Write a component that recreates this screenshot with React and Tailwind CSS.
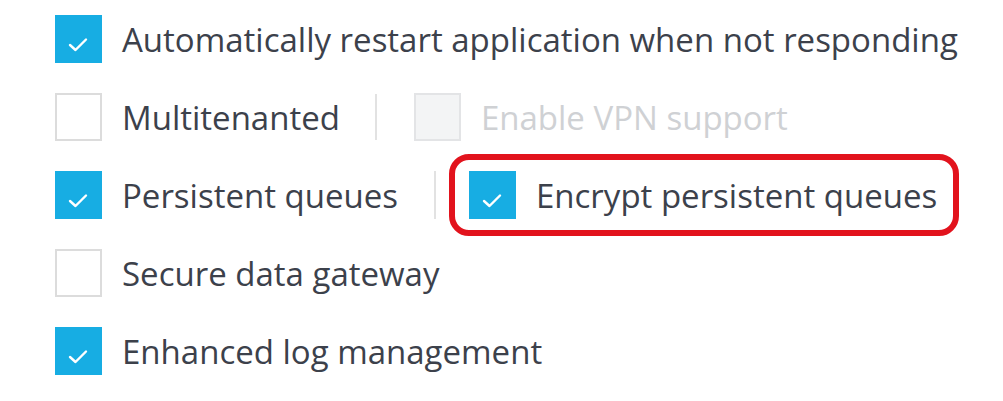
import React from 'react'

function Box({ checked, disabled }) {
  if (checked) {
    return (
      <div className="relative w-[47px] h-[48px] shrink-0 bg-[#17ade3]">
        <svg viewBox="0 0 22 17" className="absolute left-[12px] top-[21px] w-[22px] h-[17px]">
          <path d="M3 9 L8.5 14 L19 3.5" fill="none" stroke="#ffffff" strokeWidth="2.4" strokeLinecap="round" strokeLinejoin="round" />
        </svg>
      </div>
    )
  }
  return (
    <div
      className={`w-[47px] h-[48px] shrink-0 border-2 ${disabled ? 'bg-[#f3f4f5] border-[#e3e4e6]' : 'bg-white border-[#dcdcdc]'}`}
    />
  )
}

function Item({ checked, disabled, label }) {
  return (
    <div className="flex items-center gap-[20px]">
      <Box checked={checked} disabled={disabled} />
      <span className={`text-[33px] leading-none ${disabled ? 'text-[#cfd1d4]' : 'text-[#3c414b]'}`}>{label}</span>
    </div>
  )
}

export default function App() {
  return (
    <div className="w-[1003px] h-[401px] bg-white overflow-hidden" style={{ fontFamily: "'Open Sans', sans-serif" }}>
      <div className="pl-[55px] pt-[15px] flex flex-col gap-[30px]">
        <Item checked label="Automatically restart application when not responding" />
        <div className="flex items-center">
          <Item label="Multitenanted" />
          <div className="w-[2px] h-[46px] bg-[#e2e2e2] ml-[35px] mr-[37px]" />
          <Item disabled label="Enable VPN support" />
        </div>
        <div className="flex items-center">
          <Item checked label="Persistent queues" />
          <div className="w-[2px] h-[48px] bg-[#e2e2e2] ml-[36px] mr-[13px]" />
          <div className="border-[6px] border-[#e2131d] rounded-[20px] py-[11px] pl-[14px] pr-[16px] -my-[17px]">
            <Item checked label="Encrypt persistent queues" />
          </div>
        </div>
        <Item label="Secure data gateway" />
        <Item checked label="Enhanced log management" />
      </div>
    </div>
  )
}
